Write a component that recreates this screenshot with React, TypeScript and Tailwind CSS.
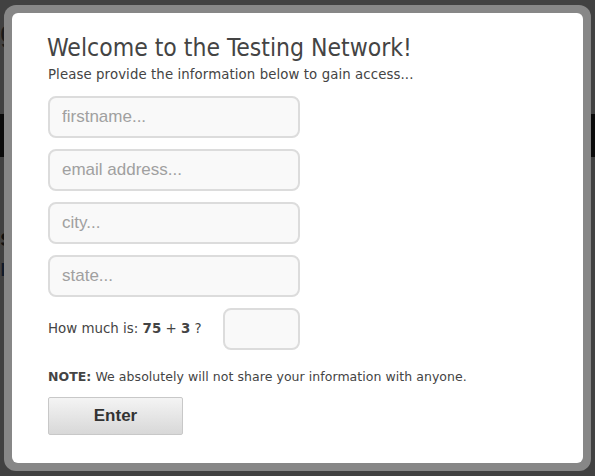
import React from "react";

function Field({ placeholder }: { placeholder: string }) {
  return (
    <input
      placeholder={placeholder}
      className="w-[252px] h-[42px] rounded-[8px] border-2 border-[#dcdcdc] bg-[#f9f9f9] px-[12px] text-[17px] text-[#555] placeholder:text-[#a0a0a0] outline-none font-['Liberation_Sans',Arial,sans-serif]"
    />
  );
}

export default function App() {
  return (
    <div className="relative w-[595px] h-[476px] overflow-hidden bg-[#414141] font-['Liberation_Sans',Arial,sans-serif]">
      {/* dimmed background page */}
      <div className="flex flex-col">
        <div className="h-[114px] pt-[14px] text-[30px] leading-[36px] text-[#1a1a1a]">g</div>
        <div className="h-[43px] bg-[#0b0b0b]" />
        <div className="pt-[66px] text-[24px] font-bold leading-[30px] text-[#111]">s</div>
        <div className="text-[24px] font-bold leading-[30px] text-[#0f1a2a]">n</div>
      </div>

      {/* modal */}
      <div className="absolute inset-0 flex pl-[4px] pt-[5px]">
        <div className="w-[587px] h-[466px] rounded-[12px] bg-[#878787] p-[8px]">
          <div className="w-full h-full rounded-[6px] bg-white pl-[36px] pt-[18px] text-[#444] font-['DejaVu_Sans',sans-serif]">
            <h1 className="text-[24.5px] leading-[34px] -ml-[1px] font-['DejaVu_Sans_Condensed','DejaVu_Sans',sans-serif]">
              Welcome to the Testing Network!
            </h1>
            <p className="text-[13.3px] leading-[18px] mt-[1px] tracking-[0.1px]">
              Please provide the information below to gain access...
            </p>
            <div className="mt-[12px] flex flex-col gap-[11px]">
              <Field placeholder="firstname..." />
              <Field placeholder="email address..." />
              <Field placeholder="city..." />
              <Field placeholder="state..." />
            </div>
            <div className="mt-[11px] flex items-center w-[252px] justify-between">
              <span className="text-[13.4px]">
                How much is: <b>75</b> + <b>3</b> ?
              </span>
              <input className="w-[77px] h-[42px] rounded-[8px] border-2 border-[#dcdcdc] bg-[#f9f9f9] outline-none" />
            </div>
            <p className="mt-[18px] text-[12.5px] tracking-[0.05px]">
              <b>NOTE:</b> We absolutely will not share your information with anyone.
            </p>
            <button className="mt-[10px] w-[135px] h-[38px] rounded-[2px] border border-[#c8c8c8] bg-gradient-to-b from-[#f4f4f4] to-[#d8d8d8] text-[17px] font-bold text-[#333] font-['Liberation_Sans',Arial,sans-serif]">
              Enter
            </button>
          </div>
        </div>
      </div>
    </div>
  );
}
